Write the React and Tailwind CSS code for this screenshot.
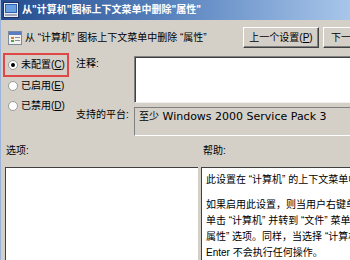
import React from "react";

const ui = { fontFamily: '"Liberation Sans", "Noto Sans CJK SC", sans-serif' };
const latin = { fontFamily: '"DejaVu Sans", "Noto Sans CJK SC", sans-serif' };

function Radio({ checked, label }) {
  return (
    <div className="flex items-center gap-[3px] h-[20px] whitespace-nowrap">
      <span className="w-[10px] h-[10px] shrink-0 rounded-full bg-white border border-[#9a9a9a] flex items-center justify-center">
        {checked && <span className="w-[4px] h-[4px] rounded-full bg-black" />}
      </span>
      <span className="text-[10px] text-black leading-none">{label}</span>
    </div>
  );
}

function PolicyIcon() {
  return (
    <svg width="14" height="14" viewBox="0 0 14 14">
      <rect x="0.5" y="0.5" width="13" height="13" fill="#f4f2ea" stroke="#7a8aa0" />
      <rect x="1" y="1" width="12" height="3" fill="#5a7cc0" />
      <rect x="3" y="6" width="3" height="2" fill="#d08030" />
      <rect x="7" y="6" width="5" height="1" fill="#8090a8" />
      <rect x="3" y="9" width="3" height="2" fill="#50a050" />
      <rect x="7" y="9" width="5" height="1" fill="#8090a8" />
    </svg>
  );
}

function TitleIcon() {
  return (
    <svg width="16" height="16" viewBox="0 0 16 16">
      <rect x="0.5" y="0.5" width="15" height="15" fill="#e8ecf4" stroke="#203060" />
      <rect x="2" y="2" width="12" height="9" fill="#3060b0" />
      <rect x="3" y="3" width="10" height="7" fill="#6aa0e0" />
      <rect x="2" y="12" width="12" height="2" fill="#a0a8b8" />
    </svg>
  );
}

const btn =
  "w-[76px] h-[21px] shrink-0 flex items-center border border-t-white border-l-white border-b-[#404040] border-r-[#404040] shadow-[inset_-1px_-1px_0_#808080] text-[10px] leading-none whitespace-nowrap";

export default function App() {
  return (
    <div className="w-[350px] h-[260px] overflow-hidden bg-[#d4d0c8] flex flex-col border-l border-[#9ab4dc]" style={ui}>
      {/* title bar */}
      <div className="h-[20px] shrink-0 flex items-center gap-[3px] pl-[2px] bg-gradient-to-r from-[#244c8e] via-[#5c86c0] to-[#a8c6ea] whitespace-nowrap">
        <TitleIcon />
        <span className="text-white font-bold text-[10px] leading-none">从"计算机"图标上下文菜单中删除"属性"</span>
      </div>

      {/* header row */}
      <div className="h-[21px] mt-[7px] shrink-0 flex items-center overflow-hidden">
        <div className="w-[242px] shrink-0 pl-[7px] flex items-center gap-[3px] whitespace-nowrap">
          <PolicyIcon />
          <span className="text-[10px] text-black leading-none">从 “计算机” 图标上下文菜单中删除 “属性”</span>
        </div>
        <div className="flex gap-[4px] shrink-0">
          <div className={btn + " justify-center"}>
            上一个设置(<u>P</u>)
          </div>
          <div className={btn + " justify-start pl-[7px]"}>
            下一个设置(<u>N</u>)
          </div>
        </div>
      </div>

      {/* middle section */}
      <div className="mt-[8px] flex">
        <div className="w-[75px] shrink-0 pl-[2px]">
          <div className="w-[66px] h-[24px] border-2 border-[#e04848] flex items-center pl-[3px] -mt-[3px]">
            <Radio checked label={<>未配置(<u>C</u>)</>} />
          </div>
          <div className="pl-[5px] -mt-[1px]">
            <Radio label={<>已启用(<u>E</u>)</>} />
            <Radio label={<>已禁用(<u>D</u>)</>} />
          </div>
        </div>
        <div className="flex-1 flex flex-col">
          <div className="flex">
            <div className="w-[58px] shrink-0 text-[10px] pt-[1px] leading-[14px] whitespace-nowrap">注释:</div>
            <div className="flex-1 h-[47px] bg-white border-t border-l border-[#808080] shadow-[inset_1px_1px_0_#404040] border-b border-b-[#f0f0f0]" />
          </div>
          <div className="flex mt-[4px]">
            <div className="w-[58px] shrink-0 text-[10px] pt-[1px] leading-[14px] whitespace-nowrap">支持的平台:</div>
            <div className="flex-1 h-[29px] border-t border-l border-[#808080] border-b border-b-white pl-[4px] pt-[2px] text-[11px] leading-[13px] text-black whitespace-nowrap" style={latin}>
              <span className="text-[10px]" style={ui}>至少</span> Windows 2000 Service Pack 3
            </div>
          </div>
        </div>
      </div>

      {/* labels */}
      <div className="flex mt-[8px] h-[14px] text-[10px] leading-[14px]">
        <div className="w-[202px] pl-[5px]">选项:</div>
        <div>帮助:</div>
      </div>

      {/* bottom panes */}
      <div className="flex-1 flex mt-[9px] gap-[3px] pl-[4px]">
        <div className="w-[193px] bg-white border-t border-l border-[#404040]" />
        <div className="flex-1 bg-white border-t border-l border-[#404040] pl-[4px] pt-[4px] text-[10px] leading-[16px] whitespace-nowrap overflow-hidden">
          <div>此设置在 “计算机” 的上下文菜单中删除 “属性”</div>
          <div className="h-[9px]" />
          <div>如果启用此设置，则当用户右键单击</div>
          <div>单击 “计算机” 并转到 “文件” 菜单</div>
          <div>属性” 选项。同样，当选择 “计算机”</div>
          <div>Enter 不会执行任何操作。</div>
        </div>
      </div>
    </div>
  );
}
